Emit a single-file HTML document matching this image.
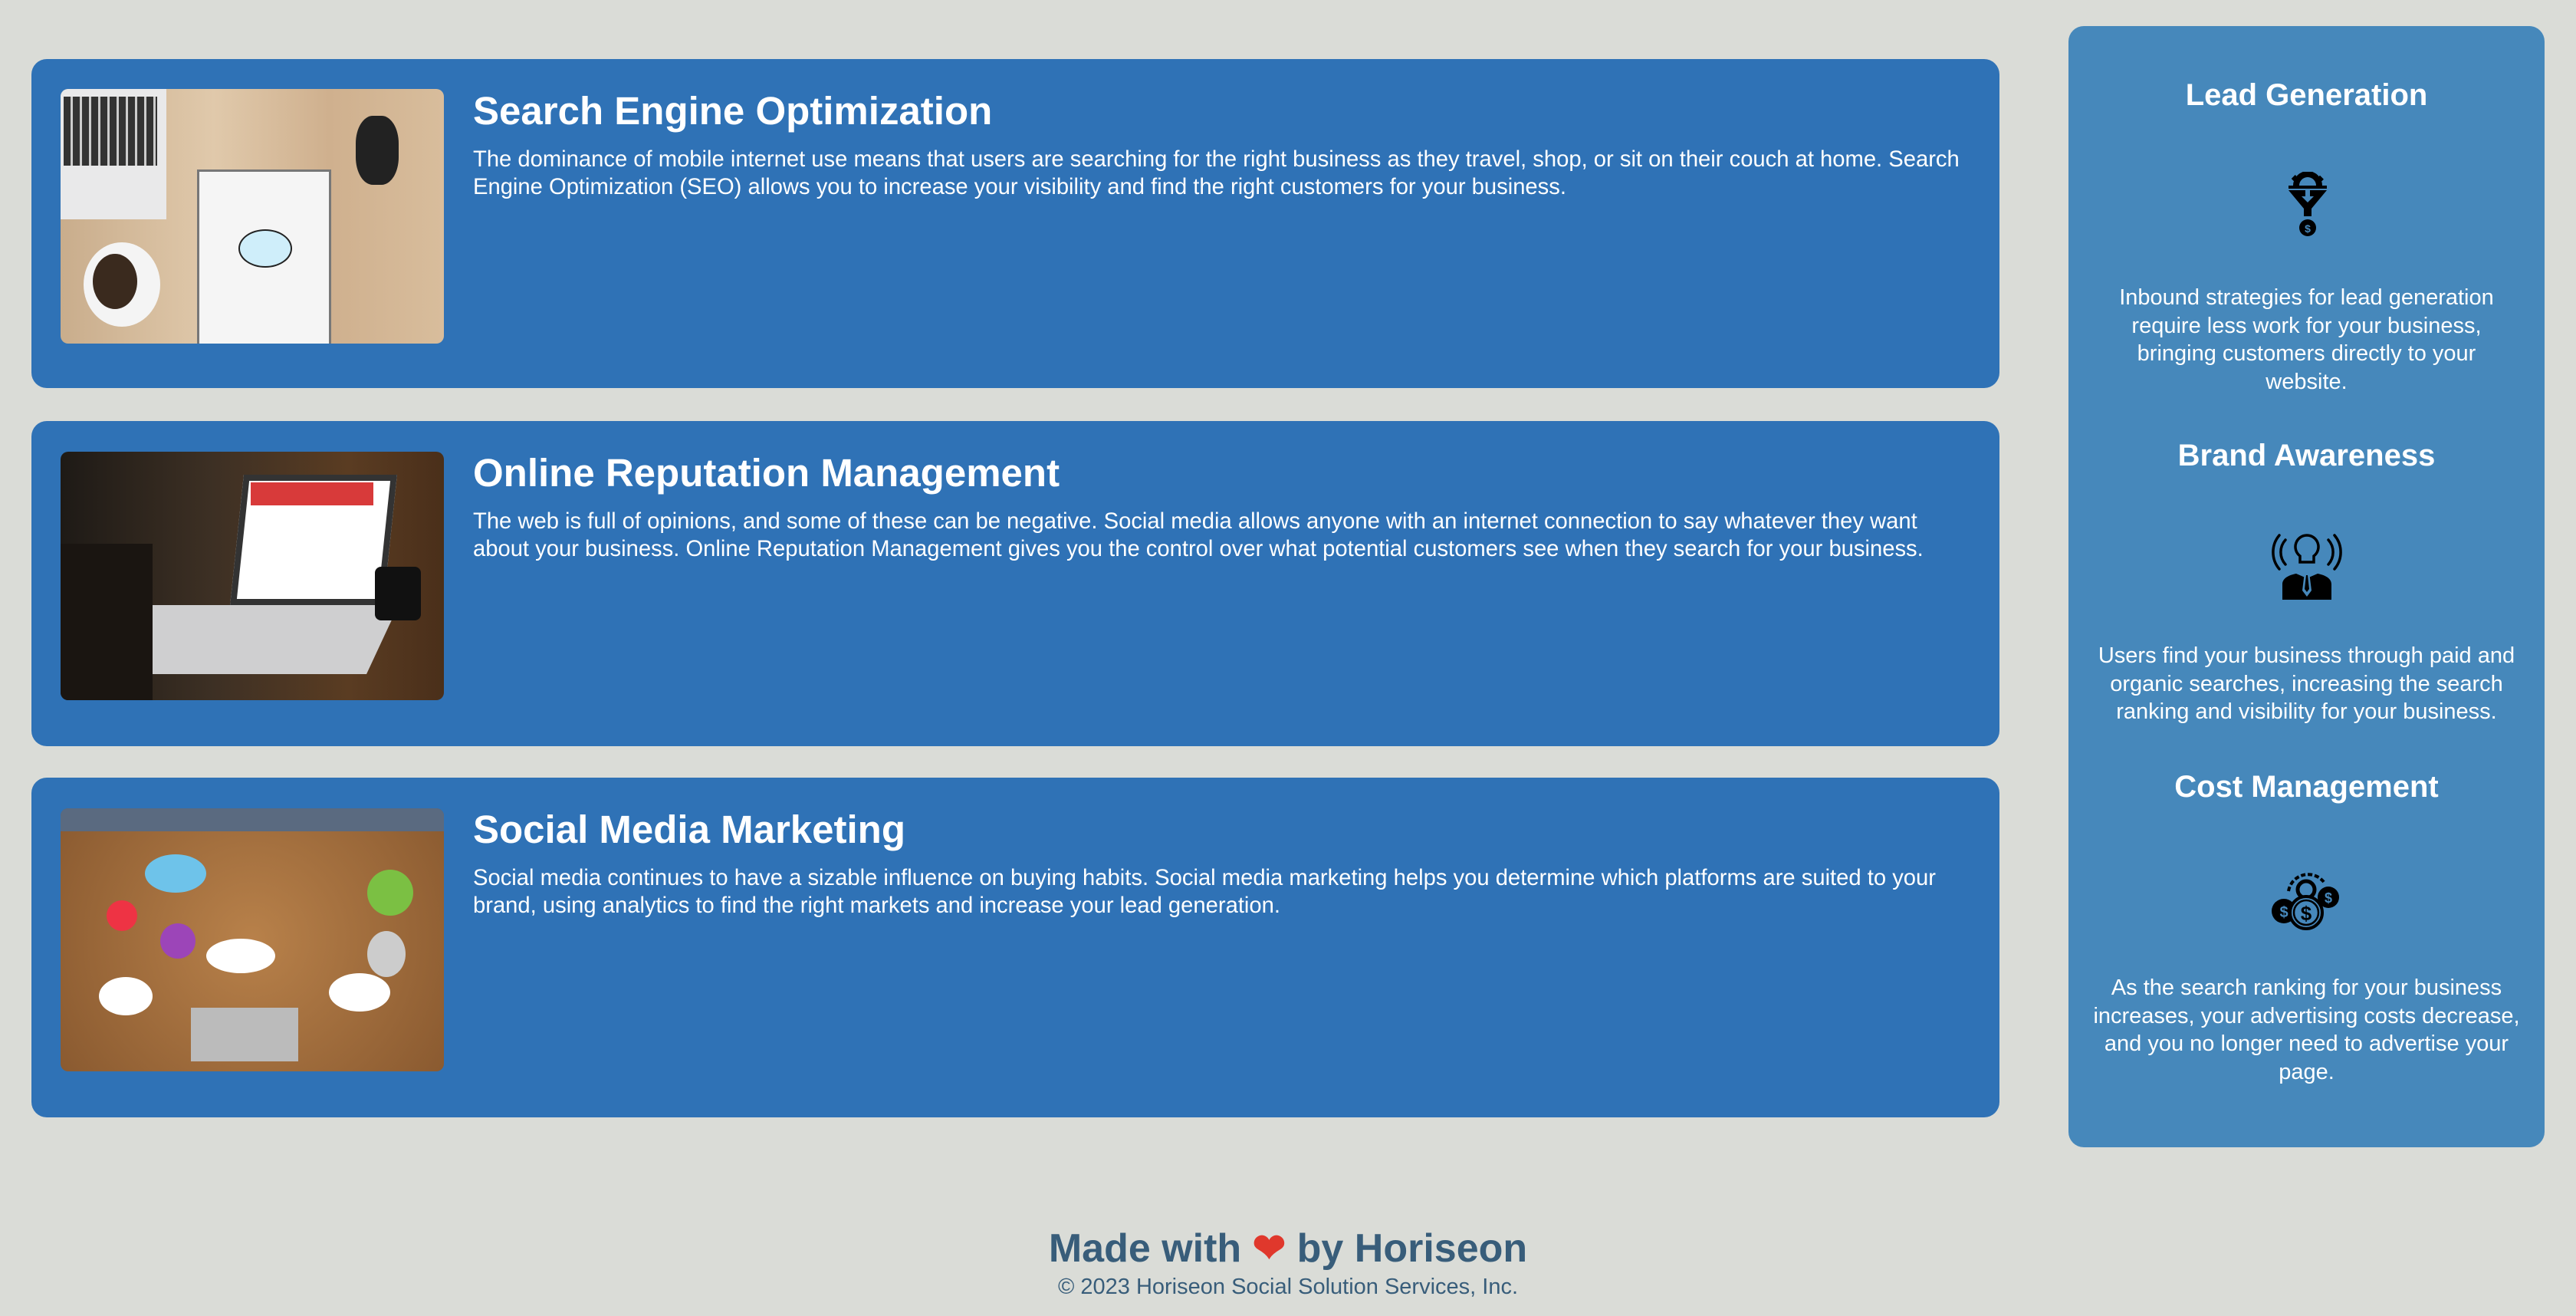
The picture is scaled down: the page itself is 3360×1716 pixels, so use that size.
<!DOCTYPE html>
<html><head><meta charset="utf-8"><style>
*{margin:0;padding:0;box-sizing:border-box}
body{width:3360px;height:1716px;background:#dadcd7;font-family:"Liberation Sans",sans-serif;position:relative;overflow:hidden}
.card{position:absolute;left:41px;width:2567px;background:#2f72b6;border-radius:20px}
.img{position:absolute;left:38px;width:500px;border-radius:10px;overflow:hidden}
.card h2{position:absolute;left:576px;color:#fff;font-size:51px;font-weight:bold;white-space:nowrap;line-height:1}
.card p{position:absolute;left:576px;color:#fff;font-size:29.2px;line-height:36px;white-space:nowrap}
.side{position:absolute;left:2698px;top:34px;width:621px;height:1462px;background:#4688bb;border-radius:20px}
.side h3{position:absolute;left:0;width:100%;text-align:center;color:#fff;font-size:40px;font-weight:bold;line-height:1}
.side p{position:absolute;left:0;width:100%;text-align:center;color:#fff;font-size:29px;line-height:36.5px;white-space:nowrap}
.side svg{position:absolute}
.foot1{position:absolute;top:1599px;width:100%;text-align:center;color:#385d7a;font-size:52px;font-weight:bold;line-height:58px}
.foot2{position:absolute;top:1660px;width:100%;text-align:center;color:#385d7a;font-size:29px;line-height:36px}
</style></head><body>

<div class="card" style="top:77px;height:429px">
 <div class="img" style="top:39px;height:332px;background:linear-gradient(90deg,#c9ad8c,#e0c9ab 40%,#cfb08e 70%,#d8bd9c)">
  <div style="position:absolute;left:0;top:0;width:138px;height:170px;background:#e9e9ea"></div>
  <div style="position:absolute;left:4px;top:10px;width:122px;height:90px;background:repeating-linear-gradient(90deg,#333 0 9px,#ccc 9px 12px)"></div>
  <div style="position:absolute;left:30px;top:200px;width:100px;height:110px;border-radius:50%;background:#f4f4f4"></div>
  <div style="position:absolute;left:42px;top:215px;width:58px;height:72px;border-radius:50%;background:#3a2a1e"></div>
  <div style="position:absolute;left:178px;top:105px;width:175px;height:230px;background:#f5f5f5;border:3px solid #777"></div>
  <div style="position:absolute;left:232px;top:183px;width:70px;height:50px;border-radius:50%;background:#cfeefa;border:2px solid #222"></div>
  <div style="position:absolute;left:385px;top:35px;width:56px;height:90px;border-radius:40%;background:#222"></div>
 </div>
 <h2 style="top:42px">Search Engine Optimization</h2>
 <p style="top:113px">The dominance of mobile internet use means that users are searching for the right business as they travel, shop, or sit on their couch at home. Search<br>Engine Optimization (SEO) allows you to increase your visibility and find the right customers for your business.</p>
</div>

<div class="card" style="top:549px;height:424px">
 <div class="img" style="top:40px;height:324px;background:linear-gradient(90deg,#1e1a16,#3d3024 40%,#5a3c22 75%,#4a2f1a)">
  <div style="position:absolute;left:230px;top:30px;width:200px;height:170px;background:#fff;border:8px solid #333;transform:skewX(-6deg)"></div>
  <div style="position:absolute;left:248px;top:40px;width:160px;height:30px;background:#d83a3a"></div>
  <div style="position:absolute;left:90px;top:200px;width:330px;height:90px;background:#cfcfd0;transform:skewX(-25deg)"></div>
  <div style="position:absolute;left:0;top:120px;width:120px;height:204px;background:#1a1511"></div>
  <div style="position:absolute;left:410px;top:150px;width:60px;height:70px;background:#111;border-radius:8px"></div>
 </div>
 <h2 style="top:42px">Online Reputation Management</h2>
 <p style="top:113px">The web is full of opinions, and some of these can be negative. Social media allows anyone with an internet connection to say whatever they want<br>about your business. Online Reputation Management gives you the control over what potential customers see when they search for your business.</p>
</div>

<div class="card" style="top:1014px;height:443px">
 <div class="img" style="top:40px;height:343px;background:radial-gradient(circle at 50% 50%,#b8814a,#8a5a30)">
  <div style="position:absolute;left:110px;top:60px;width:80px;height:50px;border-radius:50%;background:#6ec3ea"></div>
  <div style="position:absolute;left:190px;top:170px;width:90px;height:45px;border-radius:50%;background:#fff"></div>
  <div style="position:absolute;left:50px;top:220px;width:70px;height:50px;border-radius:50%;background:#fff"></div>
  <div style="position:absolute;left:350px;top:215px;width:80px;height:50px;border-radius:50%;background:#fff"></div>
  <div style="position:absolute;left:170px;top:260px;width:140px;height:70px;background:#bbb"></div>
  <div style="position:absolute;left:400px;top:80px;width:60px;height:60px;border-radius:50%;background:#7bc043"></div>
  <div style="position:absolute;left:60px;top:120px;width:40px;height:40px;border-radius:50%;background:#e34"></div>
  <div style="position:absolute;left:130px;top:150px;width:46px;height:46px;border-radius:50%;background:#9c45b8"></div>
  <div style="position:absolute;left:400px;top:160px;width:50px;height:60px;border-radius:50%;background:#ccc"></div>
  <div style="position:absolute;left:0;top:0;width:500px;height:30px;background:#5a6a80"></div>
 </div>
 <h2 style="top:42px">Social Media Marketing</h2>
 <p style="top:113px">Social media continues to have a sizable influence on buying habits. Social media marketing helps you determine which platforms are suited to your<br>brand, using analytics to find the right markets and increase your lead generation.</p>
</div>

<div class="side">
 <h3 style="top:70px">Lead Generation</h3>
 <svg style="left:287px;top:190px" width="50" height="90" viewBox="0 0 50 90">
  <path d="M6 18a19 19 0 0 1 38 0h-8a11 11 0 0 0-22 0z" fill="#000"/>
  <rect x="21" y="-1" width="8" height="8" fill="#000"/><rect x="5" y="6" width="7" height="7" fill="#000" transform="rotate(-45 8 9)"/><rect x="38" y="6" width="7" height="7" fill="#000" transform="rotate(45 41 9)"/>
  <rect x="0" y="18" width="50" height="4" fill="#000"/>
  <path d="M0 24h50L30 48v10h-10V48z" fill="#000"/>
  <path d="M22 24h6v8h5l-8 8-8-8h5z" fill="#4688bb"/>
  <circle cx="25" cy="73" r="11" fill="#000"/>
  <text x="25" y="79" font-size="14" font-weight="bold" fill="#4688bb" text-anchor="middle" font-family="Liberation Sans">$</text>
 </svg>
 <p style="top:336px">Inbound strategies for lead generation<br>require less work for your business,<br>bringing customers directly to your<br>website.</p>
 <h3 style="top:540px">Brand Awareness</h3>
 <svg style="left:265px;top:656px" width="92" height="92" viewBox="0 0 92 92">
  <g fill="none" stroke="#000" stroke-width="3.5" stroke-linecap="round">
   <path d="M10 8a34 34 0 0 0 0 44"/><path d="M18 14a24 24 0 0 0 0 32"/><path d="M82 8a34 34 0 0 1 0 44"/><path d="M74 14a24 24 0 0 1 0 32"/>
   <path d="M46 8a15 15 0 0 0-9 27v8h18v-8a15 15 0 0 0-9-27z"/>
  </g>
  <path d="M14 92V72c0-8 8-12 18-14l14 6 14-6c10 2 18 6 18 14v20z" fill="#000"/>
  <path d="M43 56h6l3 24-6 8-6-8z" fill="#4688bb"/><path d="M45 60h2l2 18-3 4-3-4z" fill="#000"/>
 </svg>
 <p style="top:803px">Users find your business through paid and<br>organic searches, increasing the search<br>ranking and visibility for your business.</p>
 <h3 style="top:972px">Cost Management</h3>
 <svg style="left:265px;top:1092px" width="90" height="90" viewBox="0 0 90 90">
  <path d="M22 36a26 26 0 0 1 46-12" fill="none" stroke="#000" stroke-width="4" stroke-dasharray="6 3"/>
  <circle cx="45" cy="34" r="11" fill="none" stroke="#000" stroke-width="5"/>
  <circle cx="16" cy="62" r="16" fill="#000"/><circle cx="74" cy="44" r="14" fill="#000"/>
  <circle cx="45" cy="64" r="21" fill="#4688bb" stroke="#000" stroke-width="4"/>
  <circle cx="45" cy="64" r="16" fill="none" stroke="#000" stroke-width="2.5"/>
  <text x="45" y="74" font-size="26" font-weight="bold" fill="#000" text-anchor="middle" font-family="Liberation Sans">$</text>
  <text x="16" y="70" font-size="20" font-weight="bold" fill="#4688bb" text-anchor="middle" font-family="Liberation Sans">$</text>
  <text x="74" y="51" font-size="18" font-weight="bold" fill="#4688bb" text-anchor="middle" font-family="Liberation Sans">$</text>
 </svg>
 <p style="top:1236px">As the search ranking for your business<br>increases, your advertising costs decrease,<br>and you no longer need to advertise your<br>page.</p>
</div>

<div class="foot1">Made with <span style="color:#e0382c">❤</span> by Horiseon</div>
<div class="foot2">© 2023 Horiseon Social Solution Services, Inc.</div>
</body></html>
